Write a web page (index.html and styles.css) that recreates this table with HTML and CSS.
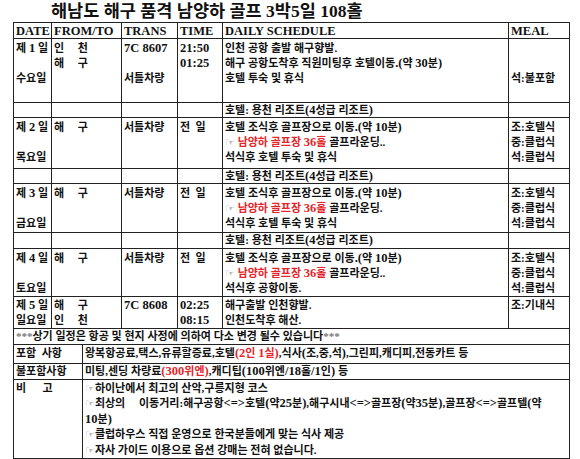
FILE: index.html
```html
<!DOCTYPE html>
<html lang="ko">
<head>
<meta charset="utf-8">
<title>해남도 해구 품격 남양하 골프</title>
<link rel="stylesheet" href="styles.css">
</head>
<body>
<div class="page">
  <h1 class="title">해남도 해구 품격 남양하 골프 3박5일 108홀</h1>
  <table class="sched">
    <colgroup>
      <col class="c-date"><col class="c-from"><col class="c-trans"><col class="c-time"><col class="c-daily"><col class="c-meal">
    </colgroup>
    <thead>
      <tr class="r-head"><th>DATE</th><th>FROM/TO</th><th>TRANS</th><th>TIME</th><th>DAILY SCHEDULE</th><th>MEAL</th></tr>
    </thead>
    <tbody>
      <tr class="r-day1">
        <td>제 <span class="n">1</span> 일<br><br>수요일</td>
        <td>인&emsp;&nbsp;천<br>해&emsp;&nbsp;구</td>
        <td><span class="n">7C 8607</span><br><br>서틀차량</td>
        <td><span class="n">21:50<br>01:25</span></td>
        <td>인천 공항 출발 해구향발.<br>해구 공항도착후 직원미팅후 호텔이동<span class="n">.(</span>약 <span class="n">30</span>분<span class="n">)</span><br>호텔 투숙 및 휴식</td>
        <td><br><br>석:불포함</td>
      </tr>
      <tr class="r-hotel">
        <td></td><td></td><td></td><td></td>
        <td>호텔: 용천 리조트<span class="n">(4</span>성급 리조트<span class="n">)</span></td>
        <td></td>
      </tr>
      <tr class="r-day2">
        <td>제 <span class="n">2</span> 일<br><br>목요일</td>
        <td>해&emsp;&nbsp;구</td>
        <td>서틀차량</td>
        <td>전&nbsp;&nbsp;일</td>
        <td>호텔 조식후 골프장으로 이동<span class="n">.(</span>약 <span class="n">10</span>분<span class="n">)</span><br><span class="hand">☞</span> <span class="red">남양하 골프장 <span class="n">36</span>홀</span> 골프라운딩..<br>석식후 호텔 투숙 및 휴식</td>
        <td>조:호텔식<br>중:클럽식<br>석:클럽식</td>
      </tr>
      <tr class="r-hotel">
        <td></td><td></td><td></td><td></td>
        <td>호텔: 용천 리조트<span class="n">(4</span>성급 리조트<span class="n">)</span></td>
        <td></td>
      </tr>
      <tr class="r-day3">
        <td>제 <span class="n">3</span> 일<br><br>금요일</td>
        <td>해&emsp;&nbsp;구</td>
        <td>서틀차량</td>
        <td>전&nbsp;&nbsp;일</td>
        <td>호텔 조식후 골프장으로 이동<span class="n">.(</span>약 <span class="n">10</span>분<span class="n">)</span><br><span class="hand">☞</span> <span class="red">남양하 골프장 <span class="n">36</span>홀</span> 골프라운딩.<br>석식후 호텔 투숙 및 휴식</td>
        <td>조:호텔식<br>중:클럽식<br>석:클럽식</td>
      </tr>
      <tr class="r-hotel2">
        <td></td><td></td><td></td><td></td>
        <td>호텔: 용천 리조트<span class="n">(4</span>성급 리조트<span class="n">)</span></td>
        <td></td>
      </tr>
      <tr class="r-day4">
        <td>제 <span class="n">4</span> 일<br><br>토요일</td>
        <td>해&emsp;&nbsp;구</td>
        <td>서틀차량</td>
        <td>전&nbsp;&nbsp;일</td>
        <td>호텔 조식후 골프장으로 이동<span class="n">.(</span>약 <span class="n">10</span>분<span class="n">)</span><br><span class="hand">☞</span> <span class="red">남양하 골프장 <span class="n">36</span>홀</span> 골프라운딩..<br>석식후 공항이동.</td>
        <td>조:호텔식<br>중:클럽식<br>석:클럽식</td>
      </tr>
      <tr class="r-day5">
        <td>제 <span class="n">5</span> 일<br>일요일</td>
        <td>해&emsp;&nbsp;구<br>인&emsp;&nbsp;천</td>
        <td><span class="n">7C 8608</span></td>
        <td><span class="n">02:25<br>08:15</span></td>
        <td>해구출발 인천향발.<br>인천도착후 해산.</td>
        <td>조:기내식</td>
      </tr>
      <tr class="r-note">
        <td colspan="6"><span class="star">***</span>상기 일정은 항공 및 현지 사정에 의하여 다소 변경 될수 있습니다<span class="star">***</span></td>
      </tr>
    </tbody>
  </table>
  <table class="info">
    <colgroup><col class="c-label"><col class="c-text"></colgroup>
    <tbody>
      <tr class="r-inc">
        <td>포함&nbsp; 사항</td>
        <td>왕복항공료,택스,유류할증료,호텔<span class="n red">(2</span><span class="red">인 <span class="n">1</span>실</span><span class="n red">)</span>,식사<span class="n">(</span>조,중,석<span class="n">)</span>,그린피,캐디피,전동카트 등</td>
      </tr>
      <tr class="r-exc">
        <td>불포함사항</td>
        <td>미팅,센딩 차량료<span class="n red">(300</span><span class="red">위엔</span><span class="n red">)</span>,캐디팁<span class="n">(100</span>위엔<span class="n">/18</span>홀<span class="n">/1</span>인<span class="n">)</span> 등</td>
      </tr>
      <tr class="r-memo">
        <td>비&emsp;&nbsp;&nbsp;고</td>
        <td><span class="hand">☞</span>하이난에서 최고의 산악,구릉지형 코스<br><span class="hand">☞</span>최상의&emsp;&nbsp;이동거리:해구공항<span class="n">&lt;=&gt;</span>호텔<span class="n">(</span>약<span class="n">25</span>분<span class="n">)</span>,해구시내<span class="n">&lt;=&gt;</span>골프장<span class="n">(</span>약<span class="n">35</span>분<span class="n">)</span>,골프장<span class="n">&lt;=&gt;</span>골프텔<span class="n">(</span>약<br><span class="n">10</span>분<span class="n">)</span><br><span class="hand">☞</span>클럽하우스 직접 운영으로 한국분들에게 맞는 식사 제공<br><span class="hand">☞</span>자사 가이드 이용으로 옵션 강매는 전혀 없습니다.</td>
      </tr>
    </tbody>
  </table>
</div>
</body>
</html>
```
FILE: styles.css
```css
* { box-sizing: border-box; }
html, body { margin: 0; padding: 0; background: #fff; }
body {
  font-family: "Liberation Serif", "Noto Sans CJK KR", serif;
  font-weight: bold;
  color: #111;
}
.page { padding-left: 13px; width: 580px; }
.title {
  margin: 0;
  height: 22px;
  padding-left: 38px;
  font-size: 17.5px;
  line-height: 22px;
  font-weight: bold;
}
table {
  border-collapse: collapse;
  table-layout: fixed;
  width: 556px;
}
td, th {
  border: 1px solid #222;
  padding: 2px 2px 0;
  vertical-align: top;
  text-align: left;
  font-size: 11px;
  line-height: 15px;
  white-space: nowrap;
  overflow: hidden;
}
th {
  font-size: 12.5px;
  line-height: 14px;
  padding: 1px 2px 0;
}
.n { font-size: 12.5px; }
.red { color: #e3262b; }
.hand {
  color: #8c8c8c;
  font-family: "DejaVu Sans", "Noto Sans CJK KR", sans-serif;
  font-size: 11px;
  line-height: 10px;
  font-weight: normal;
}
.star { color: #777; }

.c-date { width: 38px; }
.c-from { width: 70px; }
.c-trans { width: 56px; }
.c-time { width: 45px; }
.c-daily { width: 286px; }
.c-meal { width: 61px; }

.r-head { height: 16px; }
.r-day1 { height: 64px; }
.r-hotel { height: 15px; }
.r-hotel td, .r-hotel2 td { padding-top: 0; line-height: 14px; }
.r-hotel2 { height: 16px; }
.r-day2 { height: 51px; }
.r-day3 { height: 49px; }
.r-day4 { height: 47px; }
.r-day5 { height: 32px; }
.r-day5 td { padding-top: 1px; line-height: 14.5px; }
.r-note { height: 16px; }
.r-note td { padding-top: 0; line-height: 15px; }

.info { border-top: none; }
.info tr:first-child td { border-top: none; }
.c-label { width: 69px; }
.c-text { width: 487px; }
.r-inc { height: 18px; }
.r-inc td { vertical-align: middle; padding-top: 0; }
.r-exc { height: 16px; }
.r-exc td { vertical-align: middle; padding-top: 0; }
.r-memo { height: 79px; }
.r-memo td { padding-top: 1px; line-height: 15.5px; }
```
